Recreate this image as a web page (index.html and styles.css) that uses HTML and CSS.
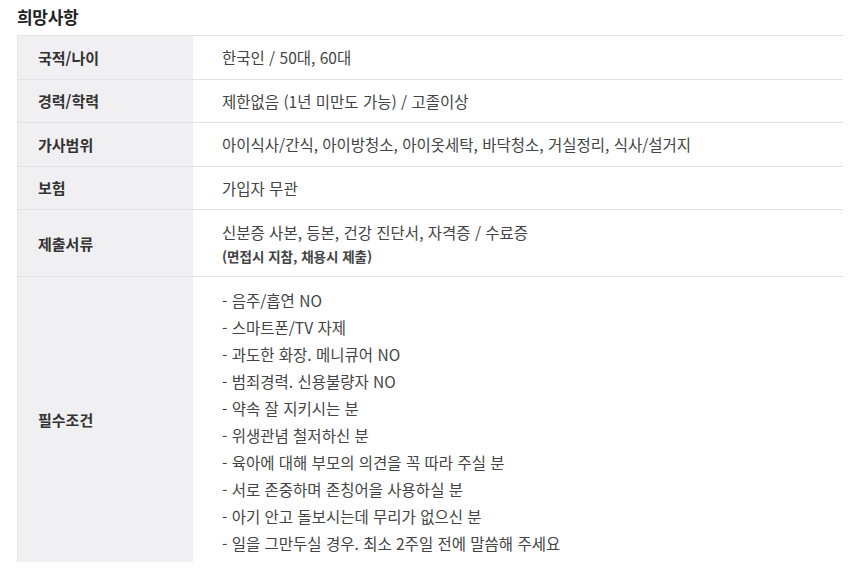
FILE: index.html
```html
<!DOCTYPE html>
<html lang="ko">
<head>
<meta charset="utf-8">
<link rel="stylesheet" href="styles.css">
</head>
<body>
<section class="wish">
  <h2 class="title">희망사항</h2>
  <div class="table">
    <div class="row">
      <div class="label">국적/나이</div>
      <div class="value">한국인 / 50대, 60대</div>
    </div>
    <div class="row">
      <div class="label">경력/학력</div>
      <div class="value">제한없음 (1년 미만도 가능) / 고졸이상</div>
    </div>
    <div class="row">
      <div class="label">가사범위</div>
      <div class="value">아이식사/간식, 아이방청소, 아이옷세탁, 바닥청소, 거실정리, 식사/설거지</div>
    </div>
    <div class="row">
      <div class="label">보험</div>
      <div class="value">가입자 무관</div>
    </div>
    <div class="row">
      <div class="label">제출서류</div>
      <div class="value docs">
        <p class="line">신분증 사본, 등본, 건강 진단서, 자격증 / 수료증</p>
        <p class="note">(면접시 지참, 채용시 제출)</p>
      </div>
    </div>
    <div class="row last">
      <div class="label">필수조건</div>
      <ul class="value list">
        <li>- 음주/흡연 NO</li>
        <li>- 스마트폰/TV 자제</li>
        <li>- 과도한 화장. 메니큐어 NO</li>
        <li>- 범죄경력. 신용불량자 NO</li>
        <li>- 약속 잘 지키시는 분</li>
        <li>- 위생관념 철저하신 분</li>
        <li>- 육아에 대해 부모의 의견을 꼭 따라 주실 분</li>
        <li>- 서로 존중하며 존칭어을 사용하실 분</li>
        <li>- 아기 안고 돌보시는데 무리가 없으신 분</li>
        <li>- 일을 그만두실 경우. 최소 2주일 전에 말씀해 주세요</li>
      </ul>
    </div>
  </div>
</section>
</body>
</html>
```

FILE: styles.css
```css
html, body {
  margin: 0;
  padding: 0;
  background: #ffffff;
}
body {
  font-family: "Noto Sans CJK KR", "Noto Sans", sans-serif;
  color: #444444;
}
.wish {
  padding: 6px 8px 0 17px;
}
.title {
  margin: 0;
  font-size: 17px;
  font-weight: 700;
  color: #222222;
  line-height: 22px;
  height: 29px;
  letter-spacing: -0.3px;
}
.table {
  border-top: 1px solid #e2e2e4;
  border-left: 1px solid #e6e6e8;
  width: 825px;
}
.row {
  display: grid;
  grid-template-columns: 175px 1fr;
  border-bottom: 1px solid #e2e2e4;
}
.row.last {
  border-bottom: none;
}
.label {
  background: #f0f0f2;
  display: flex;
  align-items: center;
  padding-left: 20px;
  font-size: 15px;
  font-weight: 600;
  color: #333333;
}
.value {
  padding: 11px 0 11px 29px;
  font-size: 15.5px;
  line-height: 20.5px;
  color: #444444;
  margin: 0;
}
.docs {
  padding-top: 11px;
  padding-bottom: 9px;
}
.docs .line {
  margin: 0;
  line-height: 22px;
}
.docs .note {
  margin: 2px 0 0;
  font-size: 13.5px;
  font-weight: 600;
  line-height: 22px;
  color: #444444;
}
.list {
  list-style: none;
  padding-top: 10px;
  padding-bottom: 5px;
}
.list li {
  line-height: 27px;
}
```
